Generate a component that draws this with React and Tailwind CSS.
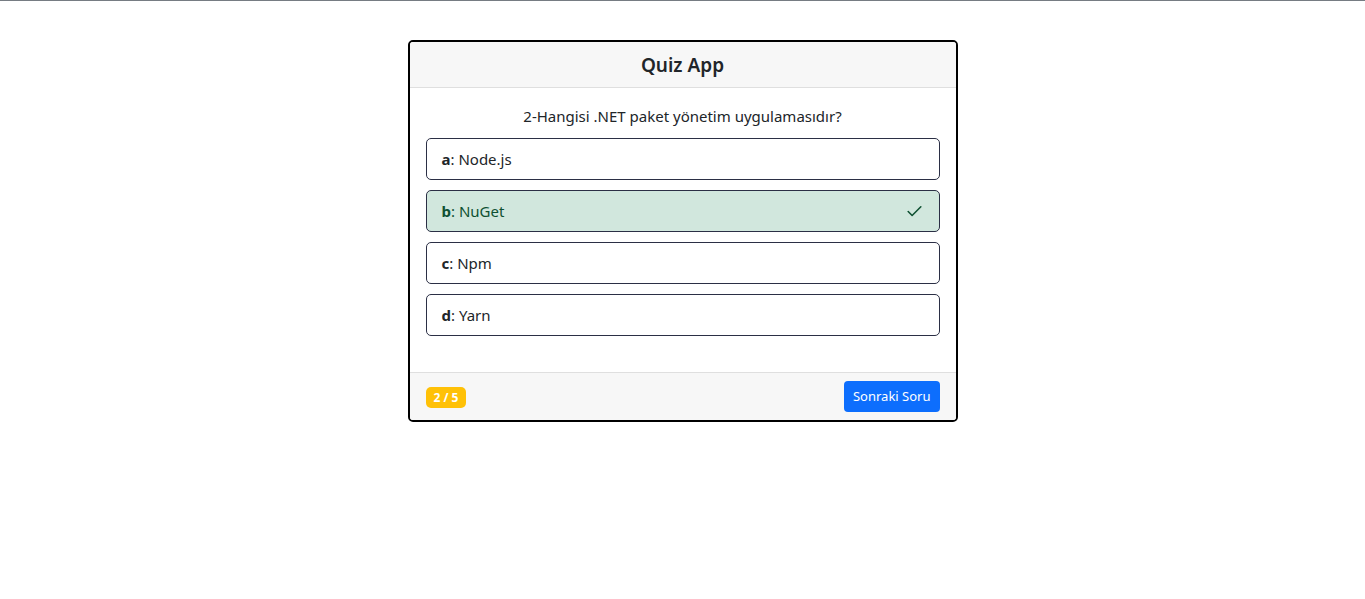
import { Check } from "lucide-react";

const options = [
    { key: "a", text: "Node.js" },
    { key: "b", text: "NuGet", correct: true },
    { key: "c", text: "Npm" },
    { key: "d", text: "Yarn" },
];

const Option = ({ option }) => {
    const color = option.correct ? "bg-[#d1e7dd] text-[#0f5132]" : "bg-white text-[#212529]";

    return (
        <li className={`flex items-center justify-between h-[42px] px-[15px] border border-[#2b2f45] rounded-[5px] ${color}`}>
            <span>
                <b className="font-bold">{option.key}</b>: {option.text}
            </span>
            {option.correct && <Check className="w-[19px] h-[19px]" strokeWidth={2} />}
        </li>
    );
};

export default function App() {
    return (
        <div className="min-h-[599px] bg-white border-t border-[#767c83] text-[#212529] font-['Noto_Sans',sans-serif]">
            <div className="pt-[39px] flex justify-center">
                <div className="w-[550px] border-2 border-black rounded-[5px] overflow-hidden">
                    <div className="h-[46px] pt-[2px] flex items-center justify-center bg-[#f7f7f7] border-b border-[#dfdfdf]">
                        <h5 className="text-[19px] font-semibold">Quiz App</h5>
                    </div>
                    <div className="px-4 pt-4 pb-[36px] bg-white">
                        <p className="text-center text-[15px] leading-6 mb-[10px]">2-Hangisi .NET paket yönetim uygulamasıdır?</p>
                        <ul className="flex flex-col gap-[10px] text-[15px]">
                            {options.map((o) => (
                                <Option key={o.key} option={o} />
                            ))}
                        </ul>
                    </div>
                    <div className="h-[48px] flex items-center justify-between px-4 bg-[#f7f7f7] border-t border-[#dfdfdf]">
                        <span className="bg-[#ffc107] text-white text-[12px] font-bold rounded-[5px] px-[8px] h-[21px] flex items-center mt-[2px]">
                            2 / 5
                        </span>
                        <button className="bg-[#0d6efd] text-white text-[13px] rounded-[4px] px-[9px] h-[31px]">
                            Sonraki Soru
                        </button>
                    </div>
                </div>
            </div>
        </div>
    );
}
